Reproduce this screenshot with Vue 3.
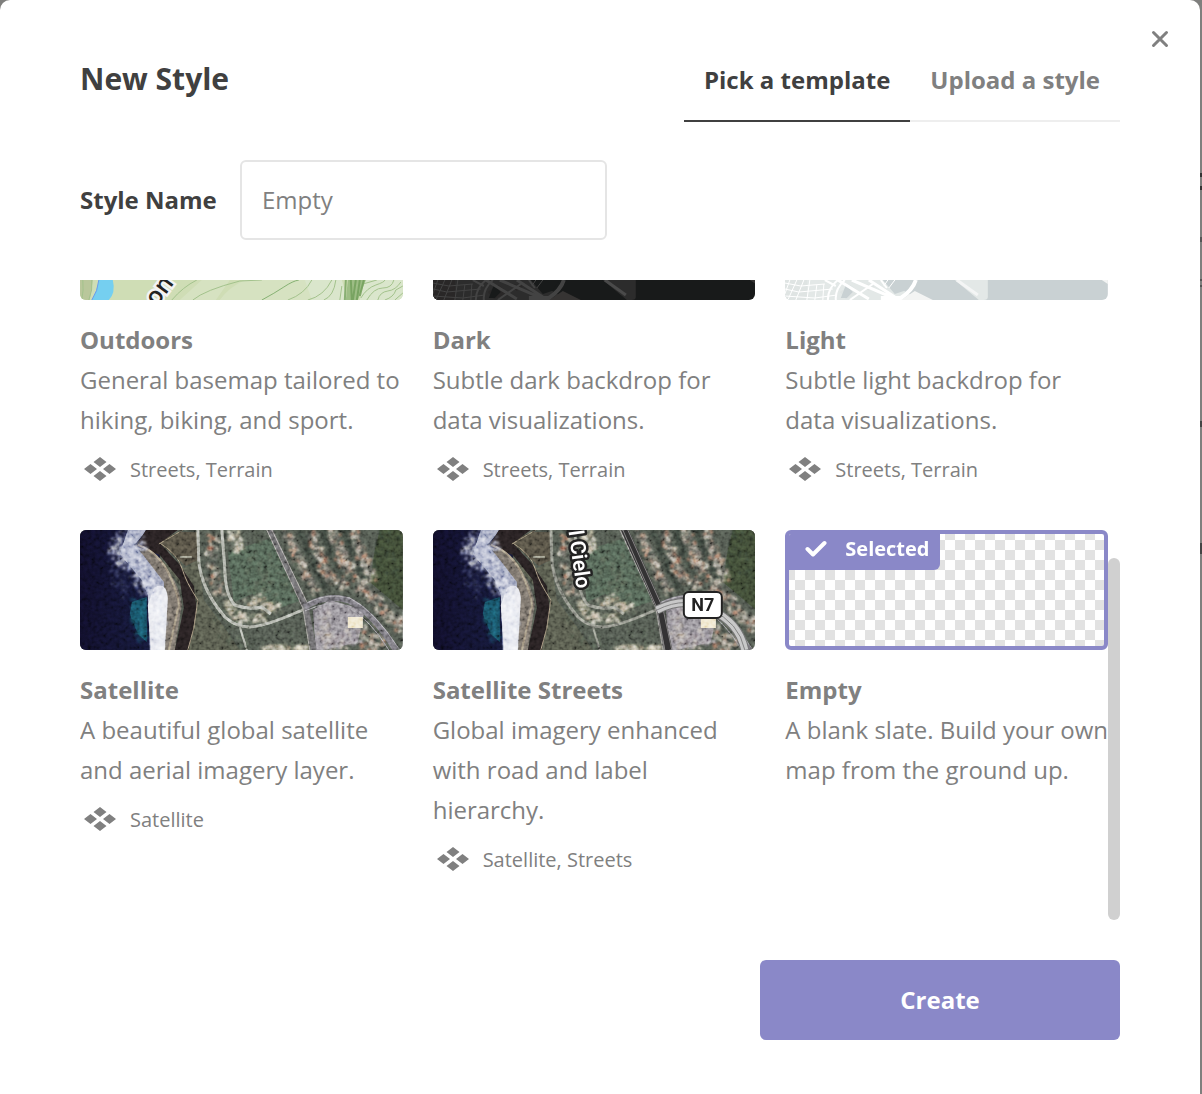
<script setup>
import { ref } from 'vue'

const tabs = ['Pick a template', 'Upload a style']
const activeTab = ref(tabs[0])
const styleName = ref('')
const selected = ref('Empty')

const templates = [
  { name: 'Outdoors', art: 'outdoors', text: 'General basemap tailored to hiking, biking, and sport.', sources: 'Streets, Terrain' },
  { name: 'Dark', art: 'city', text: 'Subtle dark backdrop for data visualizations.', sources: 'Streets, Terrain' },
  { name: 'Light', art: 'city', text: 'Subtle light backdrop for data visualizations.', sources: 'Streets, Terrain' },
  { name: 'Satellite', art: 'satellite', text: 'A beautiful global satellite and aerial imagery layer.', sources: 'Satellite' },
  { name: 'Satellite Streets', art: 'satellite', text: 'Global imagery enhanced with road and label hierarchy.', sources: 'Satellite, Streets' },
  { name: 'Empty', art: 'empty', text: 'A blank slate. Build your own map from the ground up.', sources: '' },
]

const cityColors = {
  Dark: { base: '#181a1a', land: '#2c2c2c', block: '#292727', road: '#434343', patch: '#363433', pier: '#4a4a4a' },
  Light: { base: '#c9d1d3', land: '#e3e8e7', block: '#dfe4e3', road: '#ffffff', patch: '#f3f4f3', pier: '#f4f5f5' },
}

// Small seeded generator, so the imagery is the same on every load
let seed = 7
function rand() {
  seed = (seed * 16807) % 2147483647
  return seed / 2147483647
}
function pick(list) {
  return list[Math.floor(rand() * list.length)]
}
// Scatters specks along a polyline: rooftops, trees, foam
function scatter(points, count, spread, size, colors) {
  const out = []
  for (let i = 0; i < count; i++) {
    const k = Math.floor(rand() * (points.length - 1))
    const t = rand()
    const [ax, ay] = points[k]
    const [bx, by] = points[k + 1]
    out.push({
      x: Math.round((ax + (bx - ax) * t + (rand() - 0.5) * spread) * 10) / 10,
      y: Math.round((ay + (by - ay) * t + (rand() - 0.5) * spread) * 10) / 10,
      w: Math.round((1 + rand() * size) * 10) / 10,
      h: Math.round((1 + rand() * size) * 10) / 10,
      c: pick(colors),
    })
  }
  return out
}
const roofs = ['#c2b5a2', '#a87c66', '#cfc6b6', '#8b8078', '#b5725a', '#98948c', '#ddd4c4', '#474c47', '#333a36', '#65635e', '#2c3330', '#7a746d', '#5a5c57']
const pale = ['#e8dfc4', '#c9bda6', '#f0ead6', '#444c40', '#7b7b70', '#bba48a']
const greens = ['#434c42', '#525c4e', '#4a5748', '#3b453b', '#585f52', '#4d574a']
const darks = ['#38413a', '#2c342e', '#434a42', '#262c28']
const foamColors = ['#ffffff', '#dfe3ee', '#a5abc6', '#7078a0', '#c8cde0']
const specks = [
  ...scatter([[170, 12], [180, 40], [190, 60], [205, 30]], 160, 40, 3, greens),
  ...scatter([[135, 70], [150, 108], [220, 108]], 100, 20, 2, greens),
  ...scatter([[310, 0], [305, 30], [320, 60]], 150, 26, 2, ['#35402f', '#3f4a36', '#2c3630', '#3d4635']),
  ...scatter([[219, 0], [229, 25], [243, 55]], 70, 6, 4, darks),
  ...scatter([[241, 0], [251, 25], [262, 42]], 70, 5, 4, darks),
  ...scatter([[263, 0], [272, 25], [286, 50]], 70, 5, 4, darks),
  ...scatter([[205, 0], [216, 25], [235, 62]], 170, 9, 3, roofs),
  ...scatter([[229, 0], [239, 25], [246, 47], [270, 54]], 180, 10, 3, roofs),
  ...scatter([[252, 0], [260, 25], [270, 40]], 140, 12, 3, roofs),
  ...scatter([[274, 0], [281, 25], [292, 46]], 130, 10, 3, roofs),
  ...scatter([[276, 50], [298, 72], [322, 96]], 190, 12, 3, roofs),
  ...scatter([[288, 97], [286, 118], [302, 108]], 80, 16, 3, roofs),
  ...scatter([[180, 118], [228, 117]], 80, 6, 3, pale),
  ...scatter([[131, 5], [131, 42], [140, 62]], 90, 13, 3, roofs),
  ...scatter([[153, 0], [156, 18]], 45, 13, 3, pale),
  ...scatter([[142, 70], [158, 86], [185, 87]], 80, 8, 4, pale),
  ...scatter([[166, 73], [180, 66], [188, 76], [205, 78]], 40, 9, 4, pale),
  ...scatter([[242, 84], [248, 112], [275, 106]], 150, 16, 3, ['#a8a1a8', '#817c84', '#cbbfb0', '#5d5c60', '#c0b6ac', '#91848a']),
]
const foam = [
  ...scatter([[56, 0], [36, 18], [55, 34], [70, 58]], 260, 18, 2, foamColors),
  ...scatter([[60, 12], [44, 20], [60, 40], [72, 58]], 180, 12, 3, ['#c8cde0', '#8088ac', '#e8eaf2', '#4c5480']),
  ...scatter([[74, 62], [78, 90], [76, 120]], 200, 12, 3, ['#ffffff', '#dfe3ee', '#eef0f6', '#c4c8d8']),
  ...scatter([[33, 20], [36, 45], [50, 60]], 60, 18, 1, ['#58618a', '#6c7498', '#333a66']),
  ...scatter([[56, 70], [56, 90], [62, 108]], 90, 12, 2, ['#164a5c', '#1a5664', '#163a52', '#245f6c']),
]
</script>

<template>
  <div class="page">
    <main class="modal">
      <button class="close" type="button" aria-label="Close">
        <svg viewBox="0 0 20 20" width="20" height="20"><path d="M3.500 3.500 16.500 16.500M16.500 3.500 3.500 16.500" /></svg>
      </button>

      <header class="header">
        <h1>New Style</h1>
        <nav class="tabs" role="tablist">
          <button
            v-for="tab in tabs" :key="tab" type="button" role="tab" class="tab"
            :class="{ active: tab === activeTab }" :aria-selected="tab === activeTab" @click="activeTab = tab"
          >{{ tab }}</button>
        </nav>
      </header>

      <div class="field">
        <label for="style-name">Style Name</label>
        <input id="style-name" v-model="styleName" type="text" placeholder="Empty">
      </div>

      <div class="viewport">
        <div class="grid">
          <button
            v-for="item in templates" :key="item.name" type="button" class="card"
            :aria-pressed="item.name === selected" @click="selected = item.name"
          >
            <span class="preview" :class="{ selected: item.name === selected, blank: item.art === 'empty' }">
              <svg v-if="item.art === 'outdoors'" viewBox="0 0 323 120" preserveAspectRatio="xMidYMid slice">
                <rect width="323" height="120" fill="#cfddb5" />
                <path d="M0 100H13L10 120H0Z" fill="#b9c79b" />
                <path d="M100 120 122 100H150L136 120ZM165 100H235L205 120H140Q148 108 165 100ZM235 100H262V120H205Z" fill="#d6e2c1" />
                <path d="M225 100H262L268 120H232ZM285 100H323V120H280Z" fill="#dae6cc" />
                <path d="M19 100H33Q36 113 29 120H12Q17 111 19 100Z" fill="#75cff0" />
                <path d="M19 100Q18 111 12 120" fill="none" stroke="#6b9bea" stroke-width="1" />
                <g fill="none" stroke="#a3c28c" stroke-width="1">
                  <path d="M3 100Q4 110 2 120M12 100Q13 110 9 120M92 120Q103 107 117 100M113 120Q125 110 160 101L182 100M208 120Q225 114 232 100M228 120Q244 116 252 100M244 120Q254 116 256 100M281 118Q287 108 296 105T305 100M287 120Q294 108 303 108T314 100M298 120Q300 112 308 111T321 102M305 120Q314 117 316 110L323 106M315 120 323 113M262 106 260 120M283 104 297 100" />
                </g>
                <path d="M182 120Q195 113 204 107T219 100" fill="none" stroke="#86b173" stroke-width="1" />
                <path d="M268 100H286L278 120H266Z" fill="#9dbd85" />
                <g fill="none" stroke="#6d9c57" stroke-width="2">
                  <path d="M266 100 265 120M271 100 272 120M276 100 273 120M280 100 277 120M284 100 280 116" opacity=".75" />
                </g>
                <text class="trail" x="77" y="127" transform="rotate(-54 77 127)">on</text>
              </svg>

              <svg v-else-if="item.art === 'city'" viewBox="0 0 323 120" preserveAspectRatio="xMidYMid slice">
                <rect width="323" height="120" :fill="cityColors[item.name].base" />
                <path d="M0 100H102L126 115 113 120H0Z" :fill="cityColors[item.name].land" />
                <path d="M0 100H22V120H0ZM55 112 66 105 75 113 61 119ZM76 103 90 106 84 111Z" :fill="cityColors[item.name].block" />
                <path d="M56 118 61 105 68 112 62 118ZM98 100H127L119 111 110 114Z" :fill="cityColors[item.name].base" />
                <path d="M130 111 148 120H116Z" :fill="cityColors[item.name].patch" />
                <path d="M170 100H203V117Q203 120 199 120H194Z" :fill="cityColors[item.name].land" />
                <path d="M172 100 193 115" fill="none" :stroke="cityColors[item.name].pier" stroke-width="3" />
                <g fill="none" :stroke="cityColors[item.name].road">
                  <path d="M0 103 16 106 40 104M0 109 14 112 48 109M0 116 30 118 52 115M5 100 0 114M12 100 3 120M19 100 11 120M25 100 22 120M32 105 30 120M39 104 38 120M103 100 99 106M110 100 104 108" stroke-width="1" />
                  <path d="M53 100Q43 108 43 120M60 100Q50 109 51 120M40 100 51 106M96 100 102 108M65 120 88 104" stroke-width="2" />
                  <path d="M53 100 84 119M67 100 113 120M84 100 110 117" stroke-width="3" />
                  <path d="M131 100Q128 110 116 118H96" stroke-width="4" />
                </g>
                <path d="M317 100H323V104Z" :fill="cityColors[item.name].patch" />
              </svg>

              <svg v-else-if="item.art === 'satellite'" viewBox="0 0 323 120" preserveAspectRatio="xMidYMid slice">
                <defs>
                  <filter :id="'grain-' + item.name.length" x="0" y="0" width="100%" height="100%">
                    <feTurbulence type="fractalNoise" baseFrequency=".25" numOctaves="3" seed="4" />
                    <feColorMatrix values="1.6 0 0 0 -.3  1.6 0 0 0 -.3  1.6 0 0 0 -.3  0 0 0 0 1" />
                  </filter>
                  <linearGradient :id="'sea-' + item.name.length">
                    <stop offset="0" stop-color="#0e0c24" />
                    <stop offset="1" stop-color="#131733" />
                  </linearGradient>
                </defs>
                <rect width="323" height="120" fill="#484e46" />
                <path d="M75 25Q100 50 118 28L124 70 145 98 160 120H105L118 75Z" fill="#4d5044" />
                <path d="M148 22 192 8 222 70 200 78 172 64 154 72Z" fill="#4a594c" />
                <path d="M300 0H323V80L290 52 295 20Z" fill="#38422f" />
                <path d="M233 80 250 70 285 80 278 112 245 120H236Z" fill="#827e85" />
                <rect width="80" height="120" :fill="`url(#sea-${item.name.length})`" />
                <path d="M62 12Q98 42 102 75L95 120H72V60L58 30Z" fill="#6b655e" />
                <path d="M70 14 100 2H118V30L106 36 82 15Z" fill="#4b473c" />
                <path d="M52 72 67 67V112L58 104 50 84Z" fill="#164a5c" />
                <path d="M48 0H68L54 15 64 26 84 52 86 90 82 120H70L68 65 62 50 40 24Z" fill="#8f96b2" />
                <path d="M74 58Q86 50 88 68L85 120H71L68 75Z" fill="#e4e5ec" />
                <path d="M66 0H98L80 13 100 35 114 56 117 80 109 120H95L104 78 100 50 80 25 56 16Z" fill="#231d1e" />
                <path d="M58 15Q80 22 91 48T98 80L89 120" class="path sand" />
                <path d="M80 13Q98 24 102 38T118 70L114 98 108 120M79 14 103 0" class="path sand light" />
                <g class="specks">
                  <rect v-for="(s, i) in foam" :key="i" :x="s.x" :y="s.y" :width="s.w" :height="s.h" :fill="s.c" opacity=".75" />
                  <rect v-for="(s, i) in specks" :key="i" :x="s.x" :y="s.y" :width="s.w" :height="s.h" :fill="s.c" opacity=".85" />
                </g>
                <g class="path" :class="item.name === 'Satellite' ? 'street' : 'street dim'">
                  <path d="M118 0 119 32Q122 60 145 87 156 97 170 97T225 79" />
                  <path d="M142 0 145 38Q145 64 155 75 170 80 182 77L191 84" />
                  <path d="M160 97 167 120" stroke-width="2" />
                </g>
                <path d="M190 0 226 78 234 120" class="path" stroke="#5f5e60" stroke-width="6" />
                <path d="M187 0 223 78 230 120M192 0 228 74" class="path" stroke="#96938f" stroke-width="1" />
                <path d="M225 77Q246 64 268 70 292 81 316 120" class="path" stroke="#6a686e" stroke-width="6" />
                <path d="M227 73Q248 62 270 68 294 80 320 120M225 81Q249 70 264 75 290 88 309 120" class="path" stroke="#96939a" stroke-width="1" />
                <rect x="268" y="87" width="15" height="11" fill="#eee4c8" />
                <path d="M100 27H112" stroke="#b5b9ac" stroke-width="1" />
                <rect width="323" height="120" :filter="`url(#grain-${item.name.length})`" class="grain" />
                <g v-if="item.name === 'Satellite Streets'">
                  <path d="M192 0 227 78 236 120" class="path" stroke="#343334" stroke-width="7" />
                  <path d="M190 0 224 78 232 120M195 0 230 78 239 120" class="path" stroke="#858383" stroke-width="1" />
                  <path d="M224 80Q254 65 278 80 306 92 312 120" class="path" stroke="#777" stroke-width="9" />
                  <path d="M224 80Q254 65 278 80 306 92 312 120" class="path" stroke="#c8c8c8" stroke-width="7" />
                  <path d="M224 80Q254 65 278 80 306 92 312 120" class="path" stroke="#858585" stroke-width="1" />
                  <text class="street-label" x="134" y="-10" transform="rotate(82 134 -10)">el Cielo</text>
                  <rect x="251" y="62" width="38" height="26" rx="5" fill="#fff" stroke="#222" stroke-width="2" />
                  <text class="shield" x="270" y="81">N7</text>
                </g>
              </svg>

              <span v-if="item.name === selected" class="badge">
                <svg viewBox="0 0 22 18" width="22" height="18"><path d="M2.500 9 8 14.500 19.500 3" /></svg>
                Selected
              </span>
            </span>
            <strong class="name">{{ item.name }}</strong>
            <span class="text">{{ item.text }}</span>
            <span v-if="item.sources" class="sources">
              <svg viewBox="0 0 32 26" width="32" height="26">
                <path d="M16 0 22.500 5 16 10 9.500 5ZM6.500 7 13 12 6.500 17 0 12ZM25.500 7 32 12 25.500 17 19 12ZM16 14 22.500 19 16 24 9.500 19Z" />
              </svg>
              {{ item.sources }}
            </span>
          </button>
        </div>
        <div class="track"><div class="thumb"></div></div>
      </div>

      <footer class="footer">
        <button class="create" type="button">Create</button>
      </footer>
    </main>
  </div>
</template>

<style>
body {
  background: #7f7f7d;
}
</style>

<style scoped>
.page {
  padding-right: 2px;
  background: linear-gradient(#7f7f7d 173px, #333 173px 177px, #7f7f7d 177px 186px, #333 186px 190px, #7f7f7d 190px 237px, #555 237px 242px, #7f7f7d 242px 279px, #555 279px 281px, #7f7f7d 281px 285px, #555 285px 287px, #7f7f7d 287px 421px, #444 421px 427px, #7f7f7d 427px 543px, #444 543px 554px, #7f7f7d 554px);
  font-family: "Open Sans", "Noto Sans", sans-serif;
  font-size: 24px;
  line-height: 40px;
  color: #808080;
}
.modal {
  position: relative;
  box-sizing: border-box;
  min-height: 100vh;
  padding: 60px 80px 54px;
  border-radius: 10px 10px 0 0;
  background: #fff;
}
button,
input {
  margin: 0;
  padding: 0;
  border: 0;
  background: none;
  font: inherit;
  color: inherit;
}
button {
  cursor: pointer;
}
.close {
  position: absolute;
  top: 29px;
  right: 30px;
  width: 20px;
  height: 20px;
}
svg {
  display: block;
}
.close path {
  stroke: #808080;
  stroke-width: 3;
  stroke-linecap: round;
}
.header {
  display: flex;
  justify-content: space-between;
  align-items: flex-start;
}
h1 {
  margin: 0;
  font-size: 30px;
  line-height: 38px;
  color: #404040;
}
.tabs {
  display: flex;
}
.tab {
  padding: 0 20px 20px;
  border-bottom: 2px solid #eee;
  font-weight: 700;
}
.tab.active {
  border-color: #404040;
  color: #404040;
}
.field {
  display: flex;
  align-items: center;
  margin-top: 38px;
}
.field label {
  width: 160px;
  font-weight: 700;
  color: #404040;
}
.field input {
  box-sizing: border-box;
  width: 367px;
  height: 80px;
  padding: 0 20px 2px;
  border: 2px solid #e5e5e5;
  border-radius: 6px;
}
.field input::placeholder {
  color: #808080;
  opacity: 1;
}
.viewport {
  display: flex;
  height: 640px;
  margin-top: 40px;
  overflow: hidden;
}
.grid {
  flex: 1;
  display: grid;
  grid-template-columns: repeat(3, 1fr);
  align-content: end;
  gap: 40px 30px;
  padding-bottom: 40px;
}
.card {
  display: flex;
  flex-direction: column;
  justify-content: flex-start;
  min-width: 0;
  text-align: left;
}
.preview {
  position: relative;
  box-sizing: border-box;
  align-self: stretch;
  height: 120px;
  margin-bottom: 20px;
  border-radius: 6px;
  overflow: hidden;
}
.preview > svg {
  width: 100%;
  height: 100%;
}
.preview.blank {
  background: repeating-conic-gradient(#fff 0 25%, #e2e2e2 0 50%) border-box 0 0 / 20px 20px;
}
.preview.selected {
  border: 4px solid #8a88c8;
}
.badge {
  position: absolute;
  top: -4px;
  left: -4px;
  display: flex;
  align-items: center;
  gap: 18px;
  height: 40px;
  padding: 0 10px 2px 20px;
  box-sizing: border-box;
  border-radius: 0 0 6px 0;
  background: #8a88c8;
  font-size: 20px;
  font-weight: 700;
  color: #fff;
}
.badge path {
  fill: none;
  stroke: #fff;
  stroke-width: 4;
  stroke-linecap: round;
  stroke-linejoin: round;
}
.name {
  font-weight: 700;
}
.text {
  margin-right: -2px;
}
.sources {
  display: flex;
  align-items: center;
  gap: 14px;
  margin-top: 10px;
  padding-left: 4px;
  font-size: 20px;
}
.sources path {
  fill: #808080;
}
.track {
  display: flex;
  align-items: flex-end;
  width: 12px;
}
.thumb {
  width: 12px;
  height: 362px;
  border-radius: 6px;
  background: #d0d0d0;
}
.footer {
  display: flex;
  justify-content: flex-end;
  margin-top: 40px;
}
.create {
  width: 360px;
  height: 80px;
  border-radius: 6px;
  background: #8a88c8;
  font-weight: 700;
  color: #fff;
}
.path {
  fill: none;
}
.specks {
  filter: blur(1px);
}
.sand {
  stroke: #8f8271;
  stroke-width: 2;
}
.sand.light {
  stroke: #8b806d;
  stroke-width: 1;
}
.street {
  stroke: #a5a89e;
  stroke-width: 3;
}
.street.dim {
  stroke: #80827a;
}
.grain {
  mix-blend-mode: overlay;
  opacity: .5;
}
.trail {
  font: 600 24px "Open Sans", sans-serif;
  fill: #222;
  stroke: #f3f3f3;
  stroke-width: 5px;
  paint-order: stroke;
}
.street-label {
  font: 600 21px "Roboto", sans-serif;
  fill: #fff;
  stroke: #222;
  stroke-width: 5px;
  stroke-linejoin: round;
  paint-order: stroke;
}
.shield {
  font: 700 18px "Roboto", sans-serif;
  fill: #222;
  text-anchor: middle;
}
</style>
